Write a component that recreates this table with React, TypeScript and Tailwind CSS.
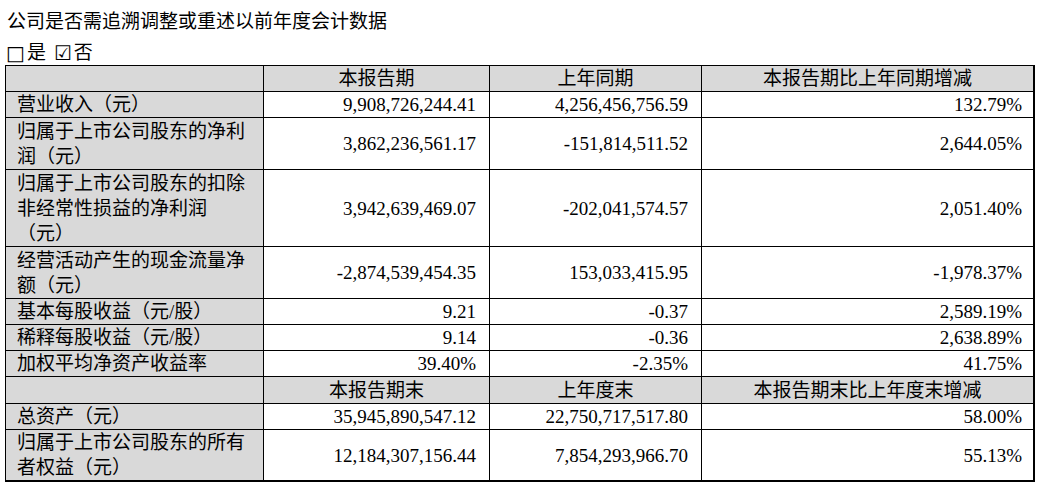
import React from "react";

type Row = {
  label: React.ReactNode;
  h: string;
  a?: string;
  b?: string;
  c?: string;
  header?: boolean;
};

const rows: Row[] = [
  { label: "", h: "h-[26px]", a: "本报告期", b: "上年同期", c: "本报告期比上年同期增减", header: true },
  { label: "营业收入（元）", h: "h-[26px]", a: "9,908,726,244.41", b: "4,256,456,756.59", c: "132.79%" },
  {
    label: (
      <>
        归属于上市公司股东的净利
        <br />
        润（元）
      </>
    ),
    h: "h-[52px]",
    a: "3,862,236,561.17",
    b: "-151,814,511.52",
    c: "2,644.05%",
  },
  {
    label: (
      <>
        归属于上市公司股东的扣除
        <br />
        非经常性损益的净利润
        <br />
        （元）
      </>
    ),
    h: "h-[77px]",
    a: "3,942,639,469.07",
    b: "-202,041,574.57",
    c: "2,051.40%",
  },
  {
    label: (
      <>
        经营活动产生的现金流量净
        <br />
        额（元）
      </>
    ),
    h: "h-[52px]",
    a: "-2,874,539,454.35",
    b: "153,033,415.95",
    c: "-1,978.37%",
  },
  { label: "基本每股收益（元/股）", h: "h-[26px]", a: "9.21", b: "-0.37", c: "2,589.19%" },
  { label: "稀释每股收益（元/股）", h: "h-[26px]", a: "9.14", b: "-0.36", c: "2,638.89%" },
  { label: "加权平均净资产收益率", h: "h-[26px]", a: "39.40%", b: "-2.35%", c: "41.75%" },
  { label: "", h: "h-[27px]", a: "本报告期末", b: "上年度末", c: "本报告期末比上年度末增减", header: true },
  { label: "总资产（元）", h: "h-[26px]", a: "35,945,890,547.12", b: "22,750,717,517.80", c: "58.00%" },
  {
    label: (
      <>
        归属于上市公司股东的所有
        <br />
        者权益（元）
      </>
    ),
    h: "h-[52px]",
    a: "12,184,307,156.44",
    b: "7,854,293,966.70",
    c: "55.13%",
  },
];

export default function App() {
  const font = {
    fontFamily: '"Liberation Serif", "Noto Sans CJK SC", "DejaVu Sans", serif',
  };
  return (
    <div className="w-[1040px] h-[486px] bg-white text-black overflow-hidden" style={font}>
      <div className="pl-[7px] pt-[10px] text-[19px] leading-[24px] h-[34px]">
        公司是否需追溯调整或重述以前年度会计数据
      </div>
      <div className="pl-[6px] mt-[7px] text-[19px] leading-[24px] h-[24px] flex items-center">
        <span className="font-['DejaVu_Sans'] text-[20px] leading-[24px]">□</span>
        <span className="ml-[2px]">是</span>
        <span className="ml-[8px] font-['DejaVu_Sans'] text-[20px] leading-[24px]">☑</span>
        <span className="ml-[2px]">否</span>
      </div>
      <div className="ml-[5px] w-[1030px] border-t border-l border-black grid grid-cols-[258px_226px_212px_333px] text-[19px] leading-[25px]">
        {rows.map((r, i) => {
          const last = i === rows.length - 1;
          const bb = last ? "border-b-2" : "border-b";
          const bg = r.header ? "bg-[#d9d9d9]" : "bg-white";
          const align = r.header ? "justify-center" : "justify-end";
          return (
            <React.Fragment key={i}>
              <div className={`${r.h} ${bb} border-r border-black bg-[#d9d9d9] flex items-center pl-[11px] whitespace-nowrap`}>
                <div>{r.label}</div>
              </div>
              <div className={`${r.h} ${bb} border-r border-black ${bg} flex items-center ${align} ${r.header ? "" : "pr-[13px]"} whitespace-nowrap`}>
                {r.a}
              </div>
              <div className={`${r.h} ${bb} border-r border-black ${bg} flex items-center ${align} ${r.header ? "" : "pr-[13px]"} whitespace-nowrap`}>
                {r.b}
              </div>
              <div className={`${r.h} ${bb} border-r-2 border-black ${bg} flex items-center ${align} ${r.header ? "" : "pr-[11px]"} whitespace-nowrap`}>
                {r.c}
              </div>
            </React.Fragment>
          );
        })}
      </div>
    </div>
  );
}
